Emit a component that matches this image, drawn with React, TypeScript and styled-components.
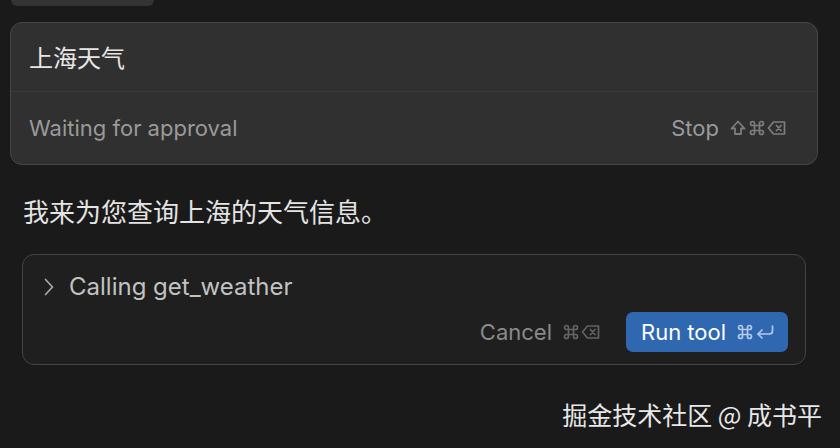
import React from "react";
import styled, { createGlobalStyle } from "styled-components";

const Global = createGlobalStyle`
  html, body { margin: 0; padding: 0; background: #1a1a1a; }
  body { font-family: Inter, "Noto Sans CJK SC", sans-serif; -webkit-font-smoothing: antialiased; }
`;

const Page = styled.div`
  width: 840px;
  height: 448px;
  overflow: hidden;
  background: #1a1a1a;
  display: flex;
  flex-direction: column;
`;

const PrevStub = styled.div`
  width: 143px;
  height: 6px;
  margin-left: 11px;
  background: #333336;
  border-radius: 0 0 6px 6px;
`;

const Composer = styled.div`
  margin: 16px 0 0 10px;
  width: 808px;
  height: 143px;
  box-sizing: border-box;
  background: #303030;
  border: 1.5px solid #464646;
  border-radius: 12px;
  display: flex;
  flex-direction: column;
`;

const InputRow = styled.div`
  height: 69px;
  display: flex;
  align-items: center;
  padding-left: 18px;
  border-bottom: 1.5px solid #3a3a3a;
  font-family: "Noto Sans CJK SC", sans-serif;
  font-size: 24px;
  color: #e6e6e6;
  padding-bottom: 2px;
  box-sizing: border-box;
`;

const StatusRow = styled.div`
  flex: 1;
  display: flex;
  align-items: center;
  justify-content: space-between;
  padding: 0 30px 0 18px;
`;

const Muted = styled.span`
  font-family: Inter, sans-serif;
  font-size: 22px;
  color: #9a9a9a;
`;

const Action = styled.span<{ $tone?: string }>`
  display: inline-flex;
  align-items: center;
  gap: 10px;
  font-family: Inter, sans-serif;
  font-size: 22px;
  color: ${(p) => p.$tone || "#9a9a9a"};
`;

const Keys = styled.span<{ $tone: string }>`
  display: inline-flex;
  align-items: center;
  gap: 1px;
  color: ${(p) => p.$tone};
`;

const Message = styled.div`
  margin: 31px 0 0 23px;
  font-family: "Noto Sans CJK SC", sans-serif;
  font-size: 26px;
  line-height: 30px;
  color: #e4e4e4;
`;

const ToolCard = styled.div`
  margin: 28px 0 0 22px;
  width: 784px;
  height: 111px;
  box-sizing: border-box;
  background: #1f1f1f;
  border: 1.5px solid #434343;
  border-radius: 12px;
  display: flex;
  flex-direction: column;
  padding: 0 17px 12px 20px;
`;

const ToolHeader = styled.div`
  display: flex;
  align-items: center;
  gap: 14px;
  height: 64px;
  padding-top: 6px;
  box-sizing: border-box;
  font-family: Inter, sans-serif;
  font-size: 24px;
  color: #c2c2c2;
`;

const ToolFooter = styled.div`
  flex: 1;
  display: flex;
  align-items: flex-end;
  justify-content: flex-end;
  gap: 25px;
`;

const CancelBtn = styled.span`
  height: 40px;
  display: inline-flex;
  align-items: center;
  gap: 10px;
  font-family: Inter, sans-serif;
  font-size: 22px;
  color: #8a8a8a;
`;

const RunBtn = styled.button`
  height: 40px;
  width: 162px;
  border: none;
  border-radius: 7px;
  background: #2f67b1;
  color: #ffffff;
  display: inline-flex;
  align-items: center;
  padding: 0 0 0 15px;
  gap: 10px;
  font-family: Inter, sans-serif;
  font-size: 22px;
`;

const Watermark = styled.div`
  margin: 31px 18px 0 0;
  align-self: flex-end;
  font-family: "Noto Sans CJK SC", sans-serif;
  font-size: 25px;
  color: #e8e8e8;
`;

const Shift = () => (
  <svg width="18" height="18" viewBox="0 0 18 18" fill="none" stroke="currentColor" strokeWidth="1.8" strokeLinejoin="round">
    <path d="M9 2.5 L2.5 9.5 H6 V15 H12 V9.5 H15.5 Z" />
  </svg>
);

const Cmd = () => (
  <svg width="18" height="18" viewBox="0 0 18 18" fill="none" stroke="currentColor" strokeWidth="1.7">
    <path d="M6.5 6.5 V4.8 A2 2 0 1 0 4.5 6.5 H13.5 A2 2 0 1 0 11.5 4.5 V13.5 A2 2 0 1 0 13.5 11.5 H4.5 A2 2 0 1 0 6.5 13.5 Z" />
  </svg>
);

const Del = () => (
  <svg width="20" height="18" viewBox="0 0 20 18" fill="none" stroke="currentColor" strokeWidth="1.7" strokeLinejoin="round" strokeLinecap="round">
    <path d="M6.5 3 H17.5 V15 H6.5 L1.5 9 Z" />
    <path d="M9.5 6.5 L14 11.5 M14 6.5 L9.5 11.5" />
  </svg>
);

const Ret = () => (
  <svg width="20" height="18" viewBox="0 0 20 18" fill="none" stroke="currentColor" strokeWidth="1.7" strokeLinejoin="round" strokeLinecap="round">
    <path d="M17.5 3 V8 Q17.5 11 14.5 11 H3" />
    <path d="M7 7 L3 11 L7 15" />
  </svg>
);

const Chevron = () => (
  <svg width="12" height="20" viewBox="0 0 12 20" fill="none" stroke="#a8a8a8" strokeWidth="1.7" strokeLinecap="round" strokeLinejoin="round">
    <path d="M2.5 2.5 L9.5 10 L2.5 17.5" />
  </svg>
);

export default function App() {
  return (
    <Page>
      <Global />
      <PrevStub />
      <Composer>
        <InputRow>上海天气</InputRow>
        <StatusRow>
          <Muted>Waiting for approval</Muted>
          <Action>
            Stop
            <Keys $tone="#7d7d7d">
              <Shift />
              <Cmd />
              <Del />
            </Keys>
          </Action>
        </StatusRow>
      </Composer>
      <Message>我来为您查询上海的天气信息。</Message>
      <ToolCard>
        <ToolHeader>
          <Chevron />
          Calling get_weather
        </ToolHeader>
        <ToolFooter>
          <CancelBtn>
            Cancel
            <Keys $tone="#636363">
              <Cmd />
              <Del />
            </Keys>
          </CancelBtn>
          <RunBtn>
            Run tool
            <Keys $tone="#b3c9ea">
              <Cmd />
              <Ret />
            </Keys>
          </RunBtn>
        </ToolFooter>
      </ToolCard>
      <Watermark>掘金技术社区 @ 成书平</Watermark>
    </Page>
  );
}
